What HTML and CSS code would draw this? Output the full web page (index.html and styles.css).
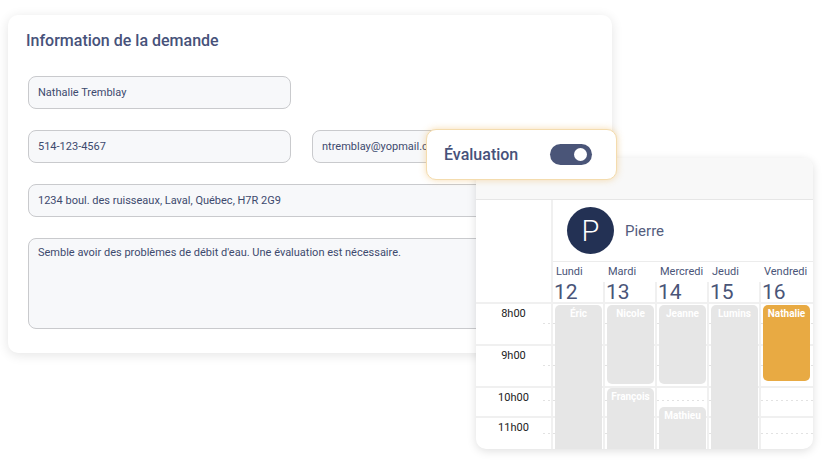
FILE: index.html
```html
<!DOCTYPE html>
<html lang="fr">
<head>
<meta charset="utf-8">
<title>Information de la demande</title>
<link rel="stylesheet" href="styles.css">
</head>
<body>
<section class="form-card">
  <h2 class="form-title">Information de la demande</h2>
  <div class="form-grid">
    <div class="field">Nathalie Tremblay</div>
    <div></div>
    <div class="field">514-123-4567</div>
    <div class="field">ntremblay@yopmail.com</div>
    <div class="field wide">1234 boul. des ruisseaux, Laval, Québec, H7R 2G9</div>
    <div class="field wide area">Semble avoir des problèmes de débit d'eau. Une évaluation est nécessaire.</div>
  </div>
</section>

<section class="cal">
  <div class="cal-top"></div>
  <div class="cal-main">
    <div class="tcol">
      <div class="tspacer"></div>
      <div class="slot h1"><span class="time">8h00</span></div>
      <div class="slot h2"><span class="time">9h00</span></div>
      <div class="slot h3"><span class="time">10h00</span></div>
      <div class="slot h4"><span class="time">11h00</span></div>
    </div>
    <div class="darea">
      <div class="person">
        <div class="avatar">P</div>
        <span class="pname">Pierre</span>
      </div>
      <div class="days">
        <div class="day"><div class="day-lbl">Lundi</div><div class="day-num first">12</div></div>
        <div class="day"><div class="day-lbl">Mardi</div><div class="day-num">13</div></div>
        <div class="day"><div class="day-lbl">Mercredi</div><div class="day-num">14</div></div>
        <div class="day"><div class="day-lbl">Jeudi</div><div class="day-num">15</div></div>
        <div class="day"><div class="day-lbl">Vendredi</div><div class="day-num">16</div></div>
      </div>
      <div class="grid">
        <div class="dcol first">
          <div class="slot h1"></div><div class="slot h2"></div><div class="slot h3"></div><div class="slot h4"></div>
          <div class="ev" style="top:3px;height:160px">Éric</div>
        </div>
        <div class="dcol">
          <div class="slot h1"></div><div class="slot h2"></div><div class="slot h3"></div><div class="slot h4"></div>
          <div class="ev" style="top:3px;height:79px">Nicole</div>
          <div class="ev" style="top:86px;height:80px">François</div>
        </div>
        <div class="dcol">
          <div class="slot h1"></div><div class="slot h2"></div><div class="slot h3"></div><div class="slot h4"></div>
          <div class="ev" style="top:3px;height:79px">Jeanne</div>
          <div class="ev" style="top:105px;height:60px">Mathieu</div>
        </div>
        <div class="dcol">
          <div class="slot h1"></div><div class="slot h2"></div><div class="slot h3"></div><div class="slot h4"></div>
          <div class="ev" style="top:3px;height:160px">Lumins</div>
        </div>
        <div class="dcol">
          <div class="slot h1"></div><div class="slot h2"></div><div class="slot h3"></div><div class="slot h4"></div>
          <div class="ev accent" style="top:3px;height:76px">Nathalie</div>
        </div>
      </div>
    </div>
  </div>
</section>

<div class="toggle-pop">
  <span class="toggle-lbl">Évaluation</span>
  <span class="switch"><span class="knob"></span></span>
</div>
</body>
</html>
```

FILE: styles.css
```css
html, body {
  margin: 0;
  padding: 0;
  background: #ffffff;
  font-family: Roboto, "Liberation Sans", Arial, sans-serif;
}

body {
  width: 822px;
  height: 466px;
  overflow: hidden;
  position: relative;
}

/* ---------- form card ---------- */
.form-card {
  margin: 15px 0 0 8px;
  width: 604px;
  height: 338px;
  box-sizing: border-box;
  padding: 16px 20px 0 20px;
  background: #fff;
  border-radius: 10px;
  box-shadow: 0 2px 12px rgba(0, 0, 0, 0.11);
}

.form-title {
  margin: 0 0 0 -2px;
  font-size: 16px;
  line-height: 20px;
  font-weight: 500;
  color: #47527a;
}

.form-grid {
  margin-top: 25px;
  display: grid;
  grid-template-columns: 263px 1fr;
  column-gap: 21px;
  row-gap: 21px;
}

.field {
  height: 33px;
  box-sizing: border-box;
  border: 1px solid #c9cacd;
  border-radius: 8px;
  background: #f7f8fa;
  padding: 0 9px;
  font-size: 11px;
  line-height: 31px;
  color: #3d4a6e;
  white-space: nowrap;
  overflow: hidden;
}

.field.wide {
  grid-column: 1 / 3;
}

.field.area {
  height: 91px;
  line-height: 14px;
  padding: 7px 9px;
}

/* ---------- calendar ---------- */
.cal {
  position: absolute;
  left: 476px;
  top: 158px;
  width: 337px;
  height: 291px;
  background: #fff;
  border-radius: 10px;
  overflow: hidden;
  box-shadow: 0 2px 10px rgba(0, 0, 0, 0.13);
}

.cal-top {
  height: 41px;
  background: #f8f8f8;
  border-bottom: 1px solid #e6e6e6;
}

.cal-main {
  display: flex;
}

.tcol {
  width: 75px;
  flex: none;
}

.tspacer {
  height: 102px;
}

.slot {
  box-sizing: border-box;
  border-top: 2px solid #f0f0f0;
  position: relative;
}

.slot::after {
  content: "";
  position: absolute;
  left: 0;
  right: 0;
  height: 1px;
  background: repeating-linear-gradient(90deg, #e2e2e2 0 2px, transparent 2px 5px);
}

.slot.h1 { height: 42px; }
.slot.h2 { height: 42px; }
.slot.h3 { height: 30px; }
.slot.h4 { height: 40px; }
.slot.h1::after, .slot.h2::after { top: 19px; }
.slot.h3::after { top: 12px; }
.slot.h4::after { top: 15px; }

.tcol .slot::after {
  left: 67px;
}

.time {
  display: block;
  text-align: center;
  font-size: 11px;
  line-height: 13px;
  padding-top: 3px;
  color: #222;
}

.darea {
  flex: 1;
  border-left: 2px solid #f0f0f0;
}

.person {
  height: 62px;
  box-sizing: border-box;
  border-bottom: 1px solid #ececec;
  display: flex;
  align-items: center;
  padding-left: 14px;
  gap: 11px;
}

.avatar {
  width: 47px;
  height: 47px;
  border-radius: 50%;
  background: #233154;
  color: #fff;
  font-size: 29px;
  font-weight: 300;
  display: flex;
  align-items: center;
  justify-content: center;
}

.pname {
  font-size: 15px;
  color: #535d7e;
}

.days {
  display: flex;
  height: 40px;
}

.day {
  flex: 1 1 0;
  min-width: 0;
}

.day-lbl {
  height: 20px;
  line-height: 20px;
  font-size: 11px;
  color: #4a5578;
  padding-left: 3px;
  white-space: nowrap;
}

.day-num {
  height: 20px;
  line-height: 20px;
  font-size: 21px;
  font-weight: 400;
  color: #4a5578;
  border-left: 2px solid #f0f0f0;
  padding-left: 1px;
  margin-left: -2px;
}

.day-num.first {
  border-left-color: transparent;
}

.grid {
  display: flex;
}

.dcol {
  flex: 1 1 0;
  min-width: 0;
  position: relative;
  border-left: 2px solid #f0f0f0;
  margin-left: -2px;
}

.dcol.first {
  border-left-color: transparent;
}

.ev {
  position: absolute;
  left: 2px;
  right: 3px;
  background: #e6e6e6;
  border-radius: 5px;
  color: #fff;
  font-size: 10px;
  font-weight: 700;
  line-height: 14px;
  padding-top: 2px;
  text-align: center;
  box-sizing: border-box;
}

.ev.accent {
  background: #e8aa43;
}

/* ---------- toggle popup ---------- */
.toggle-pop {
  position: absolute;
  left: 426px;
  top: 129px;
  width: 191px;
  height: 51px;
  box-sizing: border-box;
  background: #fff;
  border: 1px solid #f4dcae;
  border-radius: 10px;
  box-shadow: 0 0 7px rgba(238, 178, 80, 0.45);
  display: flex;
  align-items: center;
  justify-content: space-between;
  padding: 0 24px 0 17px;
}

.toggle-lbl {
  font-size: 16px;
  font-weight: 500;
  color: #47527a;
}

.switch {
  width: 42px;
  height: 21px;
  border-radius: 11px;
  background: #4a5578;
  position: relative;
}

.knob {
  position: absolute;
  right: 5px;
  top: 4px;
  width: 13px;
  height: 13px;
  border-radius: 50%;
  background: #fff;
}
```
